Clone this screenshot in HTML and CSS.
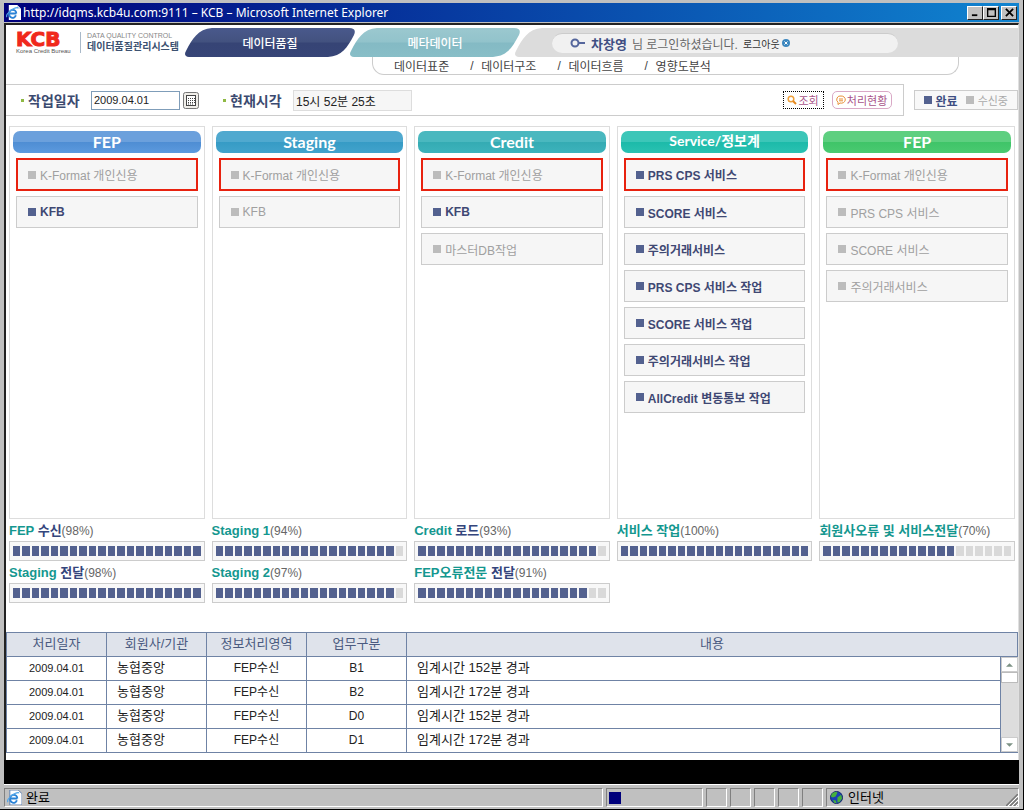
FILE: index.html
```html
<!DOCTYPE html>
<html lang="ko">
<head>
<meta charset="utf-8">
<title>KCB</title>
<link rel="stylesheet" href="styles.css">
</head>
<body>
<div class="window">
  <header class="titlebar">
    <svg class="ie" viewBox="0 0 16 16"><path d="M3 0h9l4 4v12H3z" fill="#fff"/><path d="M12 0v4h4" fill="#c9d3e4"/><path d="M11 9H3.500a3.500 3.500 0 1 1 7.500 0M3.500 9a3.600 3.600 0 0 0 7 2" fill="none" stroke="#2a83d6" stroke-width="2"/><path d="M1 13C-1 10 8 2 13 3" fill="none" stroke="#51a6ea" stroke-width="1.300"/></svg>
    <h1>http://idqms.kcb4u.com:9111 – KCB – Microsoft Internet Explorer</h1>
    <button class="win-btn" aria-label="Minimize"><svg viewBox="0 0 12 10"><path d="M2 7h6v2H2z"/></svg></button>
    <button class="win-btn" aria-label="Maximize"><svg viewBox="0 0 12 10"><path d="M1 0h10v10H1zM2.500 2.500v6h7v-6z" fill-rule="evenodd"/></svg></button>
    <button class="win-btn close" aria-label="Close"><svg viewBox="0 0 12 10"><path d="M2 1l8 8M10 1L2 9" stroke="#000" stroke-width="2"/></svg></button>
  </header>

  <main class="page">
    <div class="topbar">
      <a class="logo" href="#">
        <span class="brand"><b>KCB</b><small>Korea Credit Bureau</small></span>
        <span class="product"><small>DATA QUALITY CONTROL</small><strong>데이터품질관리시스템</strong></span>
      </a>
      <nav class="tabs">
        <a class="tab" href="#">
          <svg viewBox="0 0 170 29" preserveAspectRatio="none"><defs><linearGradient id="navy" x2="0" y2="1"><stop offset="0" stop-color="#49598c"/><stop offset=".48" stop-color="#43527f"/><stop offset=".52" stop-color="#364475"/><stop offset="1" stop-color="#374577"/></linearGradient></defs><path d="M4 29Q-2 28 1 23C7 11 13 1 27 0H164Q172 0 169 7C162 20 157 28 143 29Z" fill="url(#navy)"/></svg>
          <span>데이터품질</span>
        </a>
        <a class="tab" href="#">
          <svg viewBox="0 0 170 29" preserveAspectRatio="none"><defs><linearGradient id="aqua" x2="0" y2="1"><stop offset="0" stop-color="#9bc8cf"/><stop offset=".48" stop-color="#92c3cb"/><stop offset=".52" stop-color="#84bac4"/><stop offset="1" stop-color="#88bec7"/></linearGradient></defs><path d="M4 29Q-2 28 1 23C7 11 13 1 27 0H164Q172 0 169 7C162 20 157 28 143 29Z" fill="url(#aqua)"/></svg>
          <span>메타데이터</span>
        </a>
      </nav>
      <div class="userbar">
        <svg class="cap" viewBox="0 0 30 29"><path d="M4 29Q-2 28 1 23C7 11 13 1 27 0H30V29Z" fill="#dcdcdc"/></svg>
        <div class="user-fill">
          <div class="user">
            <svg class="key" viewBox="0 0 16 10"><circle cx="5" cy="5" r="3.500" fill="none" stroke="#55669c" stroke-width="2"/><path d="M9 5h6" stroke="#55669c" stroke-width="2"/></svg>
            <strong>차창영</strong><span>님 로그인하셨습니다.</span>
            <a href="#">로그아웃 <svg viewBox="0 0 8 8"><circle cx="4" cy="4" r="4" fill="#3b86be"/><path d="M2.500 2.500l3 3m0-3l-3 3" stroke="#fff"/></svg></a>
          </div>
        </div>
      </div>
    </div>
    <nav class="submenu">
      <a href="#">데이터표준</a><i>/</i><a href="#">데이터구조</a><i>/</i><a href="#">데이터흐름</a><i>/</i><a href="#">영향도분석</a>
    </nav>

    <div class="controls">
      <form class="filter">
        <label for="date">작업일자</label>
        <input id="date" class="date" type="text" value="2009.04.01">
        <button type="button" class="calendar" aria-label="달력"><svg viewBox="0 0 16 17"><rect x=".5" y=".5" width="15" height="16" rx="2" fill="#f0eee9" stroke="#777"/><rect x="3.500" y="3.500" width="9" height="10" fill="#fff" stroke="#444"/><path d="M5 6.500h7M5 8.500h7M5 10.500h7M5 12h5" stroke="#444" stroke-dasharray="1 1"/></svg></button>
        <label class="now-label" for="now">현재시각</label>
        <input id="now" class="now" type="text" value="15시 52분 25초" readonly>
        <button type="button" class="action focus"><svg viewBox="0 0 10 10"><circle cx="4" cy="4" r="2.800" fill="#fff" stroke="#efa03a" stroke-width="1.500"/><path d="M6 6l3 3" stroke="#e58a20" stroke-width="2"/></svg>조회</button>
        <button type="button" class="action"><svg viewBox="0 0 10 10"><path d="M5 1a4 3.600 0 1 1-1 7L2 9.500V7.300A3.600 3.600 0 0 1 5 1zM3 4h4M3 5.800h4" fill="#fff" stroke="#e88f36"/></svg>처리현황</button>
      </form>
      <div class="legend"><span class="done">완료</span><span>수신중</span></div>
    </div>

    <div class="stages">
      <section class="stage">
        <div class="panel">
          <h2 class="blue">FEP</h2>
          <ul><li class="alert">K-Format 개인신용</li><li class="done">KFB</li></ul>
        </div>
        <p><b>FEP <em>수신</em></b>(98%)</p>
        <div class="bar" role="progressbar" aria-label="FEP 수신" aria-valuenow="98" data-on="20"></div>
        <p><b>Staging <em>전달</em></b>(98%)</p>
        <div class="bar" role="progressbar" aria-label="Staging 전달" aria-valuenow="98" data-on="20"></div>
      </section>
      <section class="stage">
        <div class="panel">
          <h2 class="sky">Staging</h2>
          <ul><li class="alert">K-Format 개인신용</li><li>KFB</li></ul>
        </div>
        <p><b>Staging 1</b>(94%)</p>
        <div class="bar" role="progressbar" aria-label="Staging 1" aria-valuenow="94" data-on="19"></div>
        <p><b>Staging 2</b>(97%)</p>
        <div class="bar" role="progressbar" aria-label="Staging 2" aria-valuenow="97" data-on="19"></div>
      </section>
      <section class="stage">
        <div class="panel">
          <h2 class="teal">Credit</h2>
          <ul><li class="alert">K-Format 개인신용</li><li class="done">KFB</li><li>마스터DB작업</li></ul>
        </div>
        <p><b>Credit <em>로드</em></b>(93%)</p>
        <div class="bar" role="progressbar" aria-label="Credit 로드" aria-valuenow="93" data-on="19"></div>
        <p><b>FEP오류전문 <em>전달</em></b>(91%)</p>
        <div class="bar" role="progressbar" aria-label="FEP오류전문 전달" aria-valuenow="91" data-on="18"></div>
      </section>
      <section class="stage">
        <div class="panel">
          <h2 class="mint mixed">Service/정보계</h2>
          <ul><li class="alert done">PRS CPS 서비스</li><li class="done">SCORE 서비스</li><li class="done">주의거래서비스</li><li class="done">PRS CPS 서비스 작업</li><li class="done">SCORE 서비스 작업</li><li class="done">주의거래서비스 작업</li><li class="done">AllCredit 변동통보 작업</li></ul>
        </div>
        <p><b>서비스 작업</b>(100%)</p>
        <div class="bar" role="progressbar" aria-label="서비스 작업" aria-valuenow="100" data-on="20"></div>
      </section>
      <section class="stage">
        <div class="panel">
          <h2 class="green">FEP</h2>
          <ul><li class="alert">K-Format 개인신용</li><li>PRS CPS 서비스</li><li>SCORE 서비스</li><li>주의거래서비스</li></ul>
        </div>
        <p><b>회원사오류 및 서비스전달</b>(70%)</p>
        <div class="bar" role="progressbar" aria-label="회원사오류 및 서비스전달" aria-valuenow="70" data-on="14"></div>
      </section>
    </div>

    <table class="log">
      <colgroup><col class="c"><col class="c"><col class="c"><col class="c"><col><col class="s"></colgroup>
      <thead><tr><th>처리일자</th><th>회원사/기관</th><th>정보처리영역</th><th>업무구분</th><th colspan="2">내용</th></tr></thead>
      <tbody>
        <tr><td class="num">2009.04.01</td><td class="left">농협중앙</td><td class="mid">FEP수신</td><td class="mid">B1</td><td class="left">임계시간 152분 경과</td>
          <td class="scroll" rowspan="4"><div class="scrollbar"><button aria-label="위로"><svg viewBox="0 0 8 4"><path d="M0 4l4-4 4 4z"/></svg></button><span></span><button class="down" aria-label="아래로"><svg viewBox="0 0 8 4"><path d="M0 0l4 4 4-4z"/></svg></button></div></td></tr>
        <tr><td class="num">2009.04.01</td><td class="left">농협중앙</td><td class="mid">FEP수신</td><td class="mid">B2</td><td class="left">임계시간 172분 경과</td></tr>
        <tr><td class="num">2009.04.01</td><td class="left">농협중앙</td><td class="mid">FEP수신</td><td class="mid">D0</td><td class="left">임계시간 152분 경과</td></tr>
        <tr><td class="num">2009.04.01</td><td class="left">농협중앙</td><td class="mid">FEP수신</td><td class="mid">D1</td><td class="left">임계시간 172분 경과</td></tr>
      </tbody>
    </table>
  </main>
  <div class="void"></div>

  <footer class="status">
    <div class="cell main"><svg class="ie" viewBox="0 0 16 16"><path d="M3 0h9l4 4v12H3z" fill="#fff" stroke="#5b7dad"/><path d="M11 9H3.500a3.500 3.500 0 1 1 7.500 0M3.500 9a3.600 3.600 0 0 0 7 2" fill="none" stroke="#2a83d6" stroke-width="2"/><path d="M1 13C-1 10 8 2 13 3" fill="none" stroke="#51a6ea" stroke-width="1.300"/></svg><span>완료</span></div>
    <div class="cell load"><i></i></div>
    <div class="cell"></div><div class="cell"></div><div class="cell"></div><div class="cell"></div><div class="cell"></div>
    <div class="cell zone"><svg class="globe" viewBox="0 0 14 14"><circle cx="7" cy="7" r="6.500" fill="#1b3fb5" stroke="#10245f"/><path d="M2 3C5 0 8 1 8 2L6 6 3 7 1 6zM8 7l4-3 1 4-3 4-2 0zM3 10l3 0 1 3-2 0z" fill="#45b03c"/></svg><span>인터넷</span>
      <svg class="grip" viewBox="0 0 12 12"><path d="M0 12L12 0M4 12l8-8M8 12l4-4" stroke="#777" stroke-width="1.500"/><path d="M2 12L12 2M6 12l6-6M10 12l2-2" stroke="#fff"/></svg></div>
  </footer>
</div>
<script src="bars.js"></script>
</body>
</html>
```
FILE: bars.js
```js
document.querySelectorAll('.bar').forEach(function (bar) {
  for (var i = 0; i < 20; i++) {
    var cell = document.createElement('i');
    if (i < Number(bar.dataset.on)) cell.className = 'on';
    bar.appendChild(cell);
  }
});
```
FILE: styles.css
```css
* { box-sizing: border-box; }
body, h1, h2, p, ul { margin: 0; padding: 0; }
body, button, input { font-family: "Liberation Sans", "Noto Sans CJK KR", sans-serif; font-size: 12px; }
a { color: inherit; text-decoration: none; }
i, em { font-style: normal; }
svg { display: block; flex: none; }
button { padding: 0; }

.window { min-height: 100vh; display: flex; flex-direction: column; background: #c0c0c0; padding: 3px 4px 1px; border-right: 1px solid #000; border-bottom: 1px solid #000; }

.titlebar { display: flex; align-items: center; height: 19px; margin-bottom: 1px; padding: 0 2px; background: linear-gradient(90deg, #00007b, #1084d0); color: #fff; }
.ie { width: 15px; height: 15px; }
.titlebar h1 { flex: 1; margin-left: 2px; font: 400 12px/18px "Noto Sans", sans-serif; white-space: nowrap; }
.win-btn { width: 16px; height: 14px; display: grid; place-items: center; background: #c0c0c0; border: 1px solid; border-color: #fff #222 #222 #fff; }
.win-btn svg { width: 11px; height: 9px; }
.win-btn.close { margin-left: 2px; }

.page { flex: 1; background: #fff; border: solid #222; border-width: 2px 0 0 2px; border-right: 1px solid #e0e0e0; padding: 3px 0 7px; }
.topbar { display: flex; height: 29px; }
.logo { display: flex; width: 179px; padding: 4px 0 0 10px; white-space: nowrap; }
.brand { width: 65px; border-right: 1px solid #a9b9c9; height: 21px; }
.brand b, .brand small, .product small, .product strong { display: block; }
.brand b { font: 700 20px/15px "DejaVu Sans", sans-serif; color: #f0281c; -webkit-text-stroke: 1px #f0281c; }
.brand small { font-size: 6px; line-height: 9px; color: #555; }
.product { padding-left: 6px; color: #3d5271; }
.product small { font-size: 7px; line-height: 8px; color: #888; }
.product strong { font-size: 10px; line-height: 14px; }
.tabs { display: flex; }
.tab { position: relative; display: grid; place-items: center; width: 170px; height: 29px; margin-right: -5px; color: #fff; font-weight: 500; }
.tab svg { position: absolute; inset: 0; width: 100%; height: 100%; }
.tab span { position: relative; }
.userbar { flex: 1; display: flex; }
.cap { width: 30px; height: 29px; }
.user-fill { flex: 1; display: flex; align-items: center; background: #dcdcdc; padding-left: 7px; }
.user { display: flex; align-items: center; gap: 5px; width: 346px; height: 20px; padding-left: 18px; border-radius: 10px; background: #f1f1f1; border-top: 1px solid #ccc; color: #666; white-space: nowrap; }
.user strong { font-size: 13px; color: #3f4f83; }
.user a { display: flex; align-items: center; gap: 2px; font-size: 10px; color: #333; }
.user a svg { width: 8px; height: 8px; }
.key { width: 16px; height: 10px; }

.submenu { display: flex; align-items: center; width: 587px; height: 18px; margin-left: 366px; padding-left: 21px; border: 1px solid #ccc; border-top: 0; border-radius: 0 0 12px 12px; color: #444; }
.submenu i { width: 32px; padding-left: 21px; }

.controls { display: flex; align-items: center; margin: 9px 0 10px; }
.filter { flex: 1; display: flex; align-items: center; height: 32px; padding: 0 11px 0 15px; border: 1px solid #ccc; border-left: 0; }
.filter label { display: flex; align-items: center; width: 70px; font-size: 14px; font-weight: 700; color: #3b4a70; white-space: nowrap; }
.filter label::before { content: ""; width: 3px; height: 3px; margin-right: 4px; background: #8fb944; }
.filter .now-label { margin-left: 24px; }
.filter input { height: 19px; padding: 0 2px; border: 1px solid #7f9db9; color: #222; }
.filter .date { width: 89px; font-size: 11px; }
.filter .now { width: 119px; height: 21px; border-color: #ddd; background: #f6f6f6; font-size: 12px; margin-right: auto; }
.calendar { margin-left: 3px; border: 0; background: none; }
.calendar svg { width: 16px; height: 17px; }
.action { display: flex; align-items: center; justify-content: center; gap: 1px; width: 60px; height: 18px; margin-left: 8px; border: 1px solid #d9a9c6; border-radius: 5px; background: #fff; color: #a8548a; font-size: 11px; white-space: nowrap; }
.action svg { width: 10px; height: 10px; }
.action.focus { width: 41px; border: 1px dotted #000; border-radius: 0; }
.legend { display: flex; align-items: center; gap: 8px; height: 20px; margin-left: 10px; padding: 0 9px; border: 1px solid #ccc; background: #f8f8f8; font-size: 11px; color: #aaa; white-space: nowrap; }
.legend span { display: flex; align-items: center; }
.legend span::before, .stage li::before { content: ""; flex: none; width: 8px; height: 8px; margin-right: 4px; background: #bcbcbc; }
.legend .done { font-size: 12px; font-weight: 700; color: #3f4f83; }
.legend .done::before, .stage .done::before { background: #53618f; }

.stages { display: grid; grid-template-columns: repeat(5, minmax(0, 1fr)); gap: 7px; padding: 0 3px; }
.panel { min-height: 393px; padding: 4px 3px; border: 1px solid #ddd; }
.stage h2 { height: 22px; border-radius: 7px; text-align: center; color: #fff; font: 700 16px/22px Lato, "Noto Sans CJK KR", sans-serif; }
.stage .mixed { font-size: 14px; line-height: 20px; }
.blue { background: linear-gradient(#6ba0dc 50%, #4e8dd3 50%, #5c9ade); }
.sky { background: linear-gradient(#50a9cf 50%, #369bc5 50%, #42a3cc); }
.teal { background: linear-gradient(#4ab8bf 50%, #34abb3 50%, #3db3bc); }
.mint { background: linear-gradient(#3cc6b8 50%, #1cbaa9 50%, #2ac2b2); }
.green { background: linear-gradient(#5ecf80 50%, #3fc468 50%, #4aca71); }
.stage ul { display: grid; gap: 5px; margin: 5px 3px 0; list-style: none; }
.stage li { display: flex; align-items: center; height: 32px; padding-left: 11px; border: 1px solid #ccc; background: #f6f6f6; color: #a0a0a0; white-space: nowrap; }
.stage .alert { height: 33px; padding-left: 10px; border: 2px solid #e8220f; }
.stage .done { color: #3f4873; font-weight: 700; }
.stage p { margin: 4px 0 2px; line-height: 16px; height: 16px; color: #666; white-space: nowrap; }
.stage b { font-size: 13px; color: #14978f; }
.stage em { color: #34457c; }
.bar { display: flex; gap: 2px; height: 20px; padding: 4px 3px; border: 1px solid #ccc; background: #f8f8f8; }
.bar i { flex: 1; background: #d9d9d9; }
.bar .on { background: #53618f; }

.log { width: 100%; margin-top: 29px; border-collapse: collapse; table-layout: fixed; font-size: 13px; color: #222; }
.log .c { width: 100px; }
.log .s { width: 17px; }
.log th, .log td { height: 24px; padding: 0 0 2px; border: 1px solid #6f83a5; line-height: 20px; text-align: center; }
.log th { background: #dfe3eb; color: #4a5a80; font-weight: 400; }
.log .num { font-size: 11px; }
.log .mid { font-size: 12px; }
.log .left { padding-left: 10px; text-align: left; }
.log .scroll { height: 96px; padding: 0; border-right: 0; }
.scrollbar { display: flex; flex-direction: column; height: 95px; background: #ddd; }
.scrollbar button { display: grid; place-items: center; height: 15px; border: 1px solid #ccc; background: #fff; }
.scrollbar svg { width: 7px; height: 4px; fill: #7d9285; }
.scrollbar span { height: 11px; border: 1px solid #bbb; background: #fff; }
.scrollbar .down { margin-top: auto; }

.void { height: 24px; background: #000; }
.status { display: flex; gap: 3px; height: 24px; padding-top: 3px; border-top: 1px solid #fff; font-size: 13px; }
.cell { display: flex; align-items: center; width: 21px; height: 19px; border: 1px solid; border-color: #808080 #fff #fff #808080; }
.cell span { padding-bottom: 3px; }
.main { flex: 1; gap: 4px; padding-left: 2px; }
.load { width: 97px; padding-left: 2px; }
.load i { width: 12px; height: 12px; background: #00007b; }
.zone { width: 193px; gap: 5px; padding-left: 3px; }
.globe { width: 13px; height: 13px; }
.grip { width: 12px; height: 12px; margin-left: auto; align-self: flex-end; }
```
